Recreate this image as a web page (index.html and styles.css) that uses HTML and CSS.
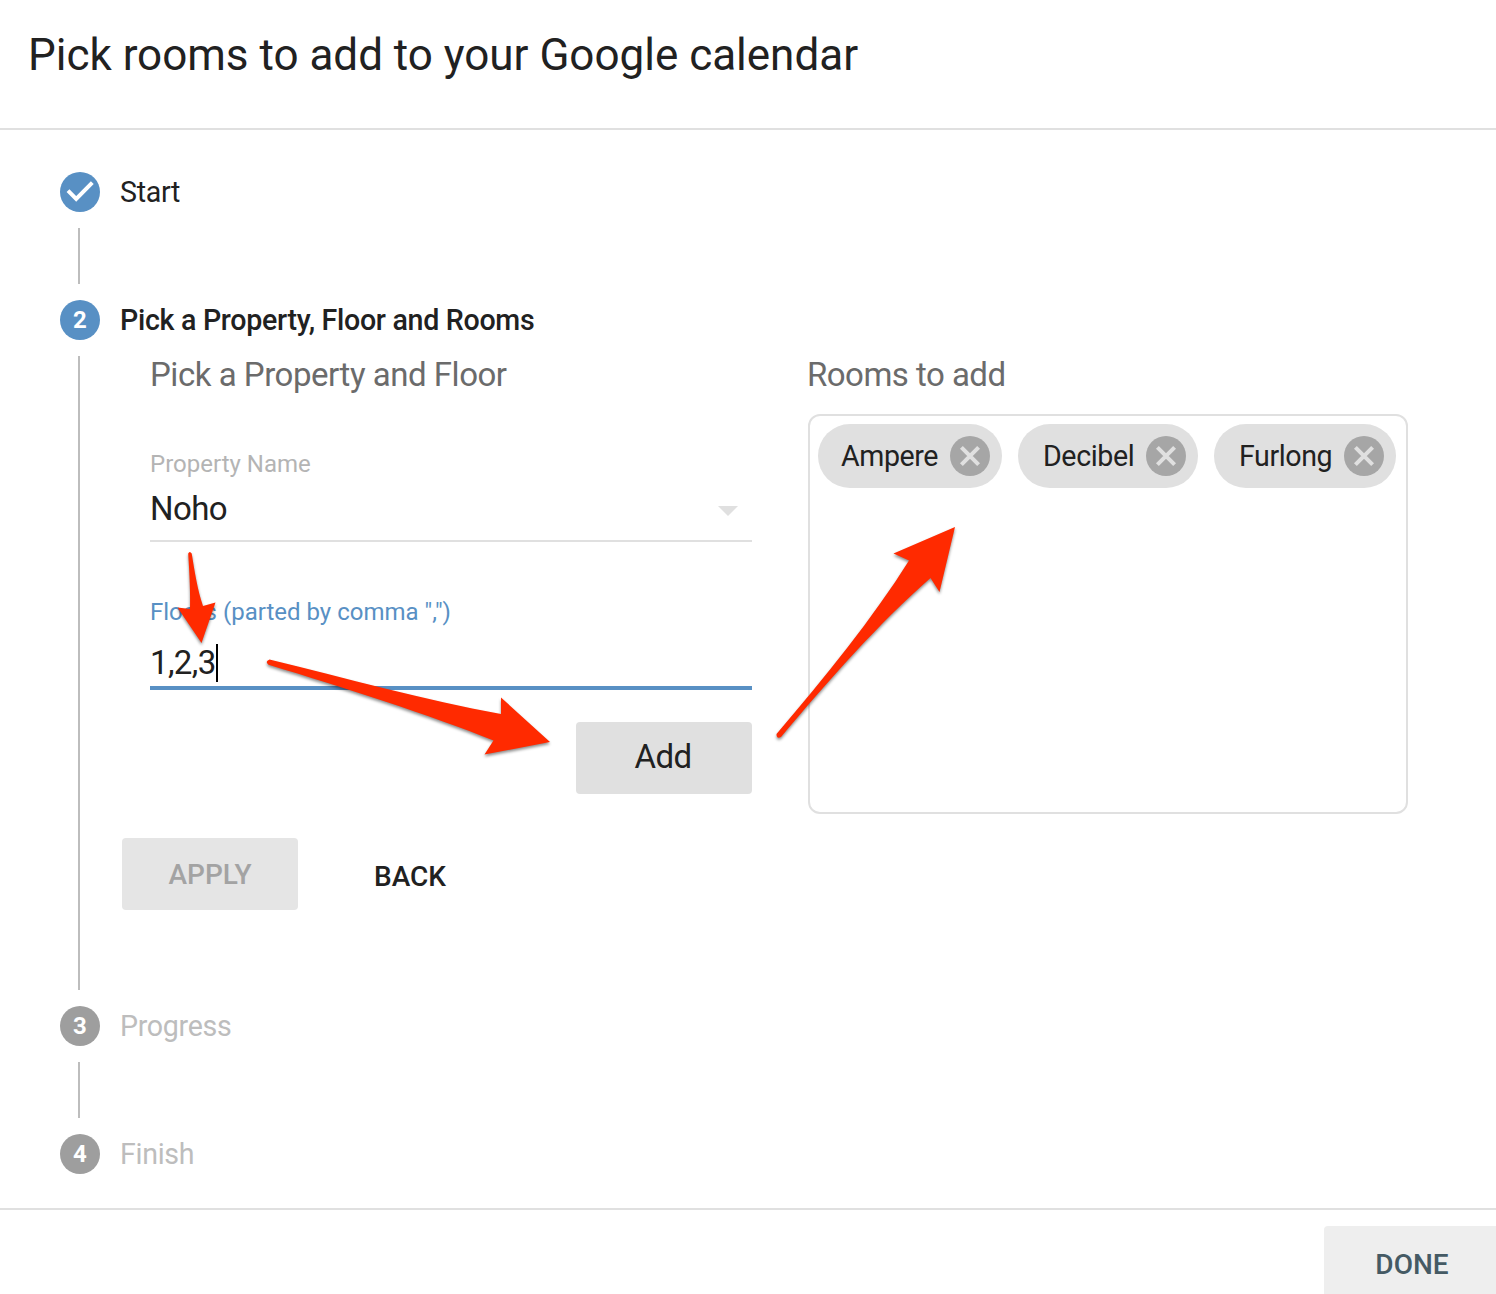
FILE: index.html
```html
<!DOCTYPE html>
<html lang="en">
<head>
<meta charset="utf-8">
<title>Pick rooms to add to your Google calendar</title>
<link rel="stylesheet" href="styles.css">
</head>
<body>
<div class="dialog">
  <header class="header"><h1 class="title">Pick rooms to add to your Google calendar</h1></header>
  <main class="stepper">
    <section class="step">
      <div class="rail">
        <span class="badge"><svg class="check" viewBox="0 0 40 40"><path d="M8 18.7L16.200 26.900L32.300 10.700" fill="none" stroke="#fff" stroke-width="4"/></svg></span>
        <span class="line"></span>
      </div>
      <div class="body"><h2 class="name">Start</h2></div>
    </section>
    <section class="step step-current">
      <div class="rail"><span class="badge">2</span><span class="line"></span></div>
      <div class="body">
        <h2 class="name name-current">Pick a Property, Floor and Rooms</h2>
        <div class="form">
          <div class="picker">
            <h3 class="subtitle">Pick a Property and Floor</h3>
            <div class="field">
              <div class="label">Property Name</div>
              <div class="value"><span class="property">Noho</span><svg class="caret" viewBox="0 0 20 10"><path d="M0 0H20L10 10Z" fill="#e0e0e0"/></svg></div>
            </div>
            <div class="field field-focus">
              <div class="label label-floors">Floors (parted by comma ",")</div>
              <div class="value value-floors"><span class="floors">1,2,3</span><span class="cursor"></span></div>
            </div>
            <button class="button button-add">Add</button>
          </div>
          <div class="rooms">
            <h3 class="subtitle subtitle-rooms">Rooms to add</h3>
            <div class="basket">
              <div class="chip chip-ampere"><span class="room">Ampere</span><svg class="remove" viewBox="0 0 40 40"><circle cx="20" cy="20" r="20" fill="#a6a6a6"/><path d="M11.400 11.400L28.600 28.600M28.600 11.400L11.400 28.600" stroke="#e0e0e0" stroke-width="4"/></svg></div>
              <div class="chip chip-decibel"><span class="room">Decibel</span><svg class="remove" viewBox="0 0 40 40"><circle cx="20" cy="20" r="20" fill="#a6a6a6"/><path d="M11.400 11.400L28.600 28.600M28.600 11.400L11.400 28.600" stroke="#e0e0e0" stroke-width="4"/></svg></div>
              <div class="chip chip-furlong"><span class="room">Furlong</span><svg class="remove" viewBox="0 0 40 40"><circle cx="20" cy="20" r="20" fill="#a6a6a6"/><path d="M11.400 11.400L28.600 28.600M28.600 11.400L11.400 28.600" stroke="#e0e0e0" stroke-width="4"/></svg></div>
            </div>
          </div>
        </div>
        <div class="actions">
          <button class="button button-apply">APPLY</button>
          <button class="button button-back">BACK</button>
        </div>
      </div>
    </section>
    <section class="step">
      <div class="rail"><span class="badge badge-idle">3</span><span class="line"></span></div>
      <div class="body"><h2 class="name name-idle">Progress</h2></div>
    </section>
    <section class="step step-last">
      <div class="rail"><span class="badge badge-idle">4</span></div>
      <div class="body"><h2 class="name name-idle">Finish</h2></div>
    </section>
  </main>
  <footer class="footer"><button class="button button-done">DONE</button></footer>
  <svg class="arrows" viewBox="0 0 1496 1294">
    <path d="M188.2 553.5Q189.7 550.500 191.7 553.5C194.5 571 197.500 590 203 606L215.5 602.5L201.5 643L177.5 607.5L190 609C190.500 594 189.500 574 188.2 553.5Z"/>
    <path d="M269.5 659.5C345 678 425 700 501 714L501 697.5L550 742L484.5 754.5L493.5 740.5C430 715 345 688 268.5 664.8Q264.500 661.5 269.5 659.5Z"/>
    <path d="M776.500 734C825 677 873 618 909 560.500L893.500 553.500L955 527L939.500 592L930.500 578C880 622 828 681 781 737Q776.500 739.500 776.500 734Z"/>
  </svg>
</div>
</body>
</html>
```
FILE: styles.css
```css
* { box-sizing: border-box; }
body { margin: 0; background: #fff; color: #212121; font-family: Roboto, sans-serif; overflow: hidden; }
h1, h2, h3 { margin: 0; font-weight: 400; }
.dialog { position: relative; display: flex; flex-direction: column; width: 1496px; height: 1294px; overflow: hidden; }
.header { height: 130px; padding: 29px 28px 0; border-bottom: 2px solid #e0e0e0; }
.title { font-size: 44px; letter-spacing: -0.01px; line-height: 52px; white-space: nowrap; }
.stepper { height: 1078px; padding: 42px 60px 0; }
.step { display: flex; gap: 20px; height: 128px; }
.step-current { height: 706px; }
.step-last { height: 40px; }
.rail { display: flex; flex-direction: column; gap: 16px; width: 40px; padding-bottom: 16px; }
.step-last .rail { padding-bottom: 0; }
.badge { display: flex; align-items: center; justify-content: center; width: 40px; height: 40px; border-radius: 50%; background: #5890c4; color: #fff; font-size: 24px; font-weight: 700; line-height: 40px; }
.badge-idle { background: #9e9e9e; }
.check { width: 40px; height: 40px; }
.line { flex: 1; width: 2px; margin-left: 18px; background: #bdbdbd; }
.body { flex: 1; }
.name { font-size: 28.6px; letter-spacing: -0.3px; line-height: 40px; white-space: nowrap; }
.name-current { font-weight: 500; }
.name-idle { color: #bdbdbd; }
.form { display: grid; grid-template-columns: 602px 600px; column-gap: 56px; padding: 15px 0 0 30px; }
.picker { display: flex; flex-direction: column; }
.subtitle { color: #6b6b6b; font-size: 33px; letter-spacing: -0.47px; line-height: 40px; white-space: nowrap; }
.subtitle-rooms { margin-left: -1px; letter-spacing: -0.52px; }
.field { height: 92px; margin-top: 55px; border-bottom: 2px solid #e0e0e0; }
.field-focus { margin-top: 56px; border-bottom: 4px solid #5890c4; }
.label { color: #b4b4b4; font-size: 24px; line-height: 28px; white-space: nowrap; }
.label-floors { color: #5890c4; }
.value { display: flex; align-items: center; justify-content: space-between; height: 40px; margin-top: 11px; padding-right: 14px; font-size: 33px; letter-spacing: -0.6px; line-height: 40px; }
.value-floors { justify-content: flex-start; margin-top: 17px; }
.caret { width: 20px; height: 10px; margin-top: 4px; }
.cursor { width: 2px; height: 38px; background: #000; }
.button { display: flex; align-items: center; justify-content: center; width: 176px; height: 72px; padding: 2px 0 0; border: 0; border-radius: 4px; background: #e0e0e0; color: #212121; font-family: inherit; font-size: 28px; font-weight: 500; line-height: 40px; }
.button-add { align-self: flex-end; margin-top: 32px; padding: 0 2px 2px 0; font-size: 33px; font-weight: 400; letter-spacing: -0.5px; }
.basket { display: flex; gap: 16px; height: 400px; margin-top: 19px; padding: 8px; border: 2px solid #e0e0e0; border-radius: 12px; }
.chip { display: flex; align-items: center; justify-content: space-between; height: 64px; padding: 0 12px 0 25px; border-radius: 32px; background: #e0e0e0; font-size: 28.6px; letter-spacing: -0.4px; }
.chip-ampere { width: 184px; padding-left: 23px; }
.chip-decibel { width: 180px; }
.chip-furlong { width: 182px; }
.remove { width: 40px; height: 40px; }
.actions { display: flex; gap: 24px; padding: 24px 0 0 2px; }
.button-apply { background: #e5e5e5; color: #a3a3a3; }
.button-back { margin-top: 2px; background: none; }
.footer { display: flex; justify-content: flex-end; height: 86px; padding-top: 16px; border-top: 2px solid #e0e0e0; }
.button-done { flex: none; margin-right: -4px; padding-top: 5px; background: #eee; color: #455a64; }
.arrows { position: absolute; inset: 0; width: 1496px; height: 1294px; fill: #ff2a00; filter: drop-shadow(0 2px 1.5px rgba(0, 0, 0, .45)); pointer-events: none; }
```
